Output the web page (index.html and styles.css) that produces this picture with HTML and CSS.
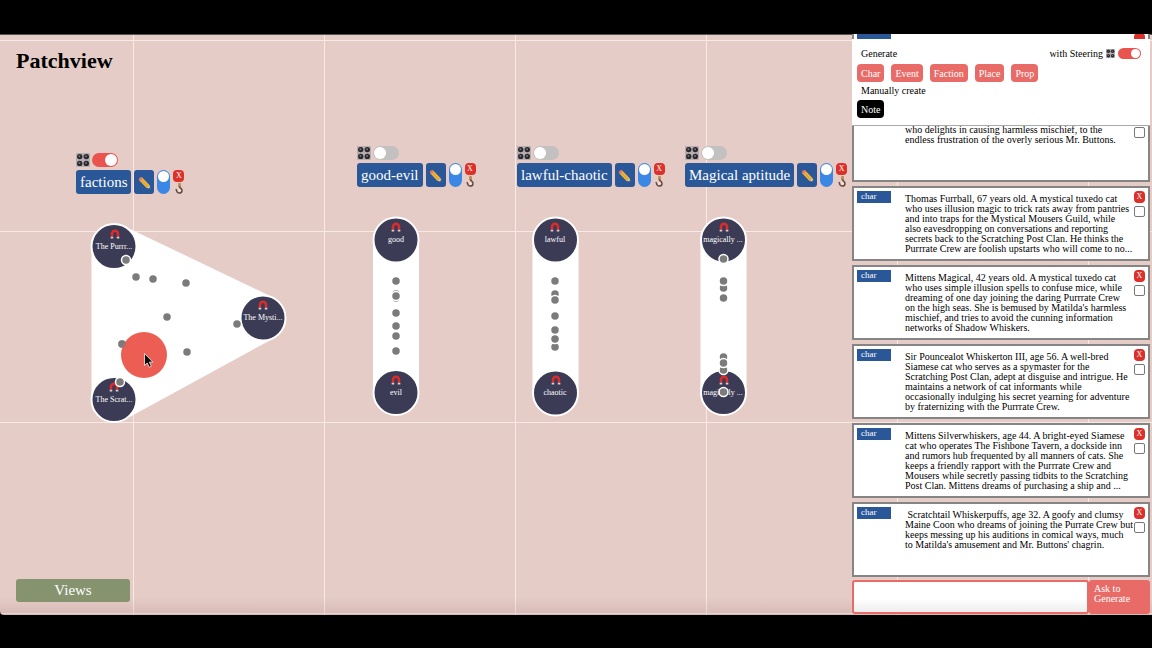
FILE: index.html
```
<!DOCTYPE html>
<html lang="en">
<head>
<meta charset="utf-8">
<title>Patchview</title>
<link rel="stylesheet" href="styles.css">
</head>
<body>
<svg class="defs" aria-hidden="true">
  <symbol id="knobs" viewBox="0 0 14 14">
    <rect width="14" height="14" rx="1" fill="#b4aeb0"/>
    <g fill="#29272b"><circle cx="3.7" cy="3.6" r="2.7"/><circle cx="10.3" cy="3.6" r="2.7"/><circle cx="3.7" cy="10.4" r="2.7"/><circle cx="10.3" cy="10.4" r="2.7"/></g>
    <g fill="#77747c"><circle cx="3.4" cy="3.2" r="1"/><circle cx="10" cy="3.2" r="1"/><circle cx="3.4" cy="10" r="1"/><circle cx="10" cy="10" r="1"/></g>
  </symbol>
  <symbol id="pencil" viewBox="0 0 14 14">
    <path d="M4 1.200 12.600 10 9.200 12.800 1 4.200z" fill="#f0b43c"/>
    <path d="M2.800 3 10.600 11.600" stroke="#cf9130" stroke-width=".8"/>
    <path d="M4 1.200 5.200 2.500 2.300 5.500 1 4.200C.6 2.600 2.400.8 4 1.200z" fill="#e0776c"/>
    <path d="M12.600 10 13.300 13.500 9.200 12.800z" fill="#ecd3a5"/>
    <path d="M12.900 12 13.300 13.500 11.600 13.200z" fill="#333"/>
  </symbol>
  <symbol id="hook" viewBox="0 0 10 11">
    <path d="M4.300 0h2.400l.3 4H4z" fill="#b78c52"/>
    <path d="M5.500 3.500C5.500 5.200 8 5.200 8 7.400A2.700 2.700 0 0 1 2.600 7.400L1.800 6.200" fill="none" stroke="#66483c" stroke-width="1.500"/>
    <circle cx="5.400" cy="7.400" r="1" fill="#f6eee8"/>
  </symbol>
  <symbol id="magnet" viewBox="0 0 9 9">
    <path d="M1.800 7V4.300a2.700 2.700 0 0 1 5.400 0V7" fill="none" stroke="#de2c2a" stroke-width="2.300"/>
    <path d="M.6 7h2.300v1.600H.6zM6.100 7h2.300v1.600H6.100z" fill="#d6d0d6"/>
  </symbol>
</svg>

<main class="app">
  <section class="canvas">
    <h1 class="title">Patchview</h1>

    <svg class="plot" viewBox="0 34 852 581" width="852" height="581">
      <g class="area">
        <path d="M114.500 247 263 318 114.500 399z"/>
        <path d="M396 240V392.500M555.500 240V393M723.500 240V392.500"/>
      </g>
      <g class="node">
        <circle cx="114" cy="246.500" r="22.500"/><circle cx="263" cy="318" r="22.500"/><circle cx="114" cy="399.500" r="22.500"/>
        <circle cx="396" cy="240" r="22.500"/><circle cx="396" cy="392.500" r="22.500"/>
        <circle cx="555.500" cy="240" r="22.500"/><circle cx="555.500" cy="393" r="22.500"/>
        <circle cx="723.500" cy="240" r="22.500"/><circle cx="723.500" cy="392.500" r="22.500"/>
      </g>
      <g>
        <use href="#magnet" x="110" y="229" width="10" height="10"/><use href="#magnet" x="258" y="300" width="10" height="10"/><use href="#magnet" x="109" y="382" width="10" height="10"/>
        <use href="#magnet" x="391" y="222" width="10" height="10"/><use href="#magnet" x="391" y="375" width="10" height="10"/>
        <use href="#magnet" x="550" y="222" width="10" height="10"/><use href="#magnet" x="551" y="375" width="10" height="10"/>
        <use href="#magnet" x="719" y="222" width="10" height="10"/><use href="#magnet" x="719" y="375" width="10" height="10"/>
      </g>
      <g class="node-name">
        <text x="114" y="249">The Purrr...</text><text x="263" y="320">The Mysti...</text><text x="114" y="402">The Scrat...</text>
        <text x="396" y="242">good</text><text x="396" y="395">evil</text>
        <text x="555" y="242">lawful</text><text x="555" y="395">chaotic</text>
        <text x="723" y="242">magically ...</text><text x="723" y="395">magically ...</text>
      </g>
      <g class="dot">
        <circle cx="126" cy="260" r="4.500"/><circle cx="136" cy="277" r="4.500"/><circle cx="153" cy="279" r="4.500"/><circle cx="186" cy="283" r="4.500"/><circle cx="167" cy="317" r="4.500"/><circle cx="237" cy="324" r="4.500"/><circle cx="122" cy="344" r="4.500"/><circle cx="187" cy="352" r="4.500"/><circle cx="120" cy="382" r="4.500"/>
        <circle cx="396" cy="281" r="4.500"/><circle cx="396" cy="294" r="4.500"/><circle cx="396" cy="298" r="4.500"/><circle cx="396" cy="296" r="4.500"/><circle cx="396" cy="313" r="4.500"/><circle cx="396" cy="326" r="4.500"/><circle cx="396" cy="336" r="4.500"/><circle cx="396" cy="351" r="4.500"/>
        <circle cx="555" cy="281" r="4.500"/><circle cx="555" cy="294" r="4.500"/><circle cx="555" cy="300" r="4.500"/><circle cx="555" cy="316" r="4.500"/><circle cx="555" cy="330" r="4.500"/><circle cx="555" cy="347" r="4.500"/><circle cx="555" cy="339" r="4.500"/>
        <circle cx="723.500" cy="259" r="4.500"/><circle cx="723.500" cy="288" r="4.500"/><circle cx="723.500" cy="281" r="4.500"/><circle cx="723.500" cy="298" r="4.500"/><circle cx="723.500" cy="357" r="4.500"/><circle cx="723.500" cy="370" r="4.500"/><circle cx="723.500" cy="363" r="4.500"/><circle cx="723.500" cy="392" r="4.500"/>
      </g>
      <circle class="drag" cx="144" cy="355" r="23"/>
      <circle cx="122" cy="344" r="4" fill="#7b7b7b" opacity=".5"/>
      <path d="M144.500 353.500v12l2.700-2.500 2 4.300 2.200-1-2-4.200h3.500z" fill="#0c0c0c" stroke="#eee" stroke-width=".8"/>
    </svg>

    <div class="view view-factions">
      <div class="view-steer"><svg class="knobs"><use href="#knobs"/></svg><input class="switch" type="checkbox" checked aria-label="Steer factions"></div>
      <div class="view-bar"><button class="view-name">factions</button><button class="edit" aria-label="Edit"><svg><use href="#pencil"/></svg></button><input class="switch-tall" type="checkbox" checked aria-label="Show factions"><div class="view-side"><button class="close">X</button><svg class="hook"><use href="#hook"/></svg></div></div>
    </div>
    <div class="view view-good">
      <div class="view-steer"><svg class="knobs"><use href="#knobs"/></svg><input class="switch" type="checkbox" aria-label="Steer good-evil"></div>
      <div class="view-bar"><button class="view-name">good-evil</button><button class="edit" aria-label="Edit"><svg><use href="#pencil"/></svg></button><input class="switch-tall" type="checkbox" checked aria-label="Show good-evil"><div class="view-side"><button class="close">X</button><svg class="hook"><use href="#hook"/></svg></div></div>
    </div>
    <div class="view view-lawful">
      <div class="view-steer"><svg class="knobs"><use href="#knobs"/></svg><input class="switch" type="checkbox" aria-label="Steer lawful-chaotic"></div>
      <div class="view-bar"><button class="view-name">lawful-chaotic</button><button class="edit" aria-label="Edit"><svg><use href="#pencil"/></svg></button><input class="switch-tall" type="checkbox" checked aria-label="Show lawful-chaotic"><div class="view-side"><button class="close">X</button><svg class="hook"><use href="#hook"/></svg></div></div>
    </div>
    <div class="view view-magic">
      <div class="view-steer"><svg class="knobs"><use href="#knobs"/></svg><input class="switch" type="checkbox" aria-label="Steer Magical aptitude"></div>
      <div class="view-bar"><button class="view-name">Magical aptitude</button><button class="edit" aria-label="Edit"><svg><use href="#pencil"/></svg></button><input class="switch-tall" type="checkbox" checked aria-label="Show Magical aptitude"><div class="view-side"><button class="close">X</button><svg class="hook"><use href="#hook"/></svg></div></div>
    </div>

    <button class="views">Views</button>
  </section>

  <aside class="sidebar">
    <div class="list">
      <article class="card"><span class="tag"></span><p class="text"></p><div class="card-side"><button class="close" aria-label="Remove"></button><input class="tick" type="checkbox" aria-label="Select"></div></article>
      <article class="card"><span class="tag"></span><p class="text">
who delights in causing harmless mischief, to the
endless frustration of the overly serious Mr. Buttons.</p><div class="card-side"><button class="close" aria-label="Remove"></button><input class="tick" type="checkbox" aria-label="Select"></div></article>
      <article class="card"><span class="tag">char</span><p class="text">Thomas Furrball, 67 years old. A mystical tuxedo cat
who uses illusion magic to trick rats away from pantries
and into traps for the Mystical Mousers Guild, while
also eavesdropping on conversations and reporting
secrets back to the Scratching Post Clan. He thinks the
Purrrate Crew are foolish upstarts who will come to no...</p><div class="card-side"><button class="close">X</button><input class="tick" type="checkbox" aria-label="Select"></div></article>
      <article class="card"><span class="tag">char</span><p class="text">Mittens Magical, 42 years old. A mystical tuxedo cat
who uses simple illusion spells to confuse mice, while
dreaming of one day joining the daring Purrrate Crew
on the high seas. She is bemused by Matilda's harmless
mischief, and tries to avoid the cunning information
networks of Shadow Whiskers.</p><div class="card-side"><button class="close">X</button><input class="tick" type="checkbox" aria-label="Select"></div></article>
      <article class="card"><span class="tag">char</span><p class="text">Sir Pouncealot Whiskerton III, age 56. A well-bred
Siamese cat who serves as a spymaster for the
Scratching Post Clan, adept at disguise and intrigue. He
maintains a network of cat informants while
occasionally indulging his secret yearning for adventure
by fraternizing with the Purrrate Crew.</p><div class="card-side"><button class="close">X</button><input class="tick" type="checkbox" aria-label="Select"></div></article>
      <article class="card"><span class="tag">char</span><p class="text">Mittens Silverwhiskers, age 44. A bright-eyed Siamese
cat who operates The Fishbone Tavern, a dockside inn
and rumors hub frequented by all manners of cats. She
keeps a friendly rapport with the Purrrate Crew and
Mousers while secretly passing tidbits to the Scratching
Post Clan. Mittens dreams of purchasing a ship and ...</p><div class="card-side"><button class="close">X</button><input class="tick" type="checkbox" aria-label="Select"></div></article>
      <article class="card"><span class="tag">char</span><p class="text"> Scratchtail Whiskerpuffs, age 32. A goofy and clumsy
Maine Coon who dreams of joining the Purrate Crew but
keeps messing up his auditions in comical ways, much
to Matilda's amusement and Mr. Buttons' chagrin.</p><div class="card-side"><button class="close">X</button><input class="tick" type="checkbox" aria-label="Select"></div></article>
    </div>

    <div class="panel">
      <div class="panel-head"><span>Generate</span><label class="steering">with Steering <svg class="knobs-small"><use href="#knobs"/></svg><input class="switch switch-small" type="checkbox" checked></label></div>
      <div class="buttons"><button class="make">Char</button><button class="make">Event</button><button class="make">Faction</button><button class="make">Place</button><button class="make">Prop</button></div>
      <div class="panel-sub">Manually create</div>
      <div class="buttons"><button class="make make-note">Note</button></div>
    </div>

    <form class="ask"><input class="ask-text" type="text" aria-label="Prompt"><button class="ask-send" type="button">Ask to Generate</button></form>
  </aside>
</main>
</body>
</html>
```

FILE: styles.css
```
* { box-sizing: border-box; }

body {
  margin: 0;
  height: 100vh;
  padding: 34px 0 33px;
  background: #000;
  color: #000;
  font-family: "Liberation Serif", Georgia, serif;
  overflow: hidden;
}

button {
  border: 0;
  padding: 0;
  font-family: inherit;
  color: #fff;
  white-space: nowrap;
}

input { margin: 0; }
.defs { position: absolute; width: 0; height: 0; }

.app {
  display: flex;
  height: 100%;
  border-bottom-left-radius: 4px;
  background-color: #e6ccc7;
  background-image:
    linear-gradient(to bottom, transparent 97%, rgba(110, 70, 65, 0.14)),
    linear-gradient(to right, #f7e9e6 1px, transparent 1px),
    linear-gradient(to bottom, #f7e9e6 1px, transparent 1px);
  background-size: 100% 100%, 191px 191px, 191px 191px;
  background-position: 0 0, 133px 0, 0 6px;
  box-shadow: inset 0 1px #555;
}

.canvas {
  position: relative;
  flex: 1;
  min-width: 0;
  display: flex;
  flex-direction: column;
  justify-content: space-between;
  align-items: flex-start;
  padding: 14px 16px 13px;
}

.title { margin: 0; font-size: 22px; line-height: 26px; }

.views {
  width: 114px;
  height: 23px;
  border-radius: 3px;
  background: #85936f;
  font-size: 15px;
}

/* plot */
.plot { position: absolute; left: 0; top: 0; }
.area { fill: #fff; stroke: #fff; stroke-width: 46; stroke-linejoin: round; }
.node { fill: #3b3b55; stroke: #fff; stroke-width: 2; }
.node-name { fill: #fff; font-size: 8px; text-anchor: middle; }
.dot { fill: #7b7b7b; stroke: #fff; stroke-width: 1.5; }
.drag { fill: #ec5d54; }

/* view headers placed on the canvas */
.view { position: absolute; display: grid; gap: 3px; }
.view-factions { left: 76px; top: 119px; }
.view-good { left: 357px; top: 112px; }
.view-lawful { left: 517px; top: 112px; }
.view-magic { left: 685px; top: 112px; }
.view-steer { display: flex; align-items: center; gap: 2px; }
.view-bar { display: flex; gap: 3px; }
.view-name {
  height: 24px;
  padding: 0 4px;
  border-radius: 3px;
  background: #2a5798;
  font-size: 15px;
}
.edit {
  display: grid;
  place-items: center;
  width: 20px;
  border-radius: 3px;
  background: #2a5798;
}
.edit svg { width: 13px; height: 13px; }
.view-side { display: grid; justify-items: center; gap: 1px; align-content: start; }
.knobs { width: 14px; height: 14px; }
.knobs-small { width: 9px; height: 9px; }
.hook { width: 10px; height: 11px; }

.close {
  width: 11px;
  height: 12px;
  border-radius: 4px;
  background: #dc3028;
  font-size: 8px;
  line-height: 12px;
}

.switch {
  appearance: none;
  display: flex;
  align-items: center;
  width: 26px;
  height: 14px;
  padding: 0 1px;
  border-radius: 7px;
  background: #c3c0c0;
}
.switch::before { content: ""; width: 12px; height: 12px; border-radius: 50%; background: #fff; }
.switch:checked { justify-content: flex-end; background: #e9554e; }
.switch-small { width: 23px; height: 11px; }
.switch-small::before { width: 9px; height: 9px; }

.switch-tall {
  appearance: none;
  width: 13px;
  height: 24px;
  padding: 1px;
  border-radius: 7px;
  background: #3b87e6;
}
.switch-tall::before { content: ""; display: block; width: 11px; height: 11px; border-radius: 50%; background: #fff; }

/* sidebar */
.sidebar {
  position: relative;
  flex: 0 0 300px;
  min-width: 0;
  display: flex;
  flex-direction: column;
  gap: 3px;
  padding-bottom: 1px;
}
.list {
  flex: 1;
  min-height: 0;
  display: flex;
  flex-direction: column;
  justify-content: flex-end;
  gap: 4px;
  margin-right: 2px;
  overflow: hidden;
}
.card {
  flex: none;
  display: flex;
  align-items: flex-start;
  height: 75px;
  padding: 3px;
  border: 2px solid #858585;
  background: #fff;
}
.tag {
  width: 34px;
  height: 12px;
  padding-left: 4px;
  background: #2a5798;
  color: #fff;
  font-size: 9px;
  line-height: 11px;
}
.text {
  flex: 1;
  min-width: 0;
  margin: 3px 0 0 14px;
  font-size: 10px;
  line-height: 10px;
  white-space: pre;
}
.card-side { display: grid; justify-items: center; gap: 3px; }
.tick {
  appearance: none;
  width: 11px;
  height: 11px;
  border: 1px solid #777;
  border-radius: 2px;
  background: #fff;
}

.panel {
  position: absolute;
  top: 5px;
  left: 0;
  right: 2px;
  padding: 7px 9px 7px 5px;
  border-bottom: 1px solid #aaa;
  background: #fff;
  font-size: 10px;
}
.panel-head { display: flex; justify-content: space-between; padding-left: 4px; height: 14px; align-items: center; }
.panel-sub { padding: 3px 4px; line-height: 12px; }
.steering { display: flex; align-items: center; gap: 3px; }
.buttons { display: flex; gap: 7px; }
.panel-head + .buttons { padding-top: 4px; }
.make {
  height: 18px;
  padding: 0 4px;
  border-radius: 4px;
  background: #e86b67;
  font-size: 10px;
}
.make-note { background: #000; }

.ask { display: flex; height: 34px; margin-right: 2px; }
.ask-text {
  flex: 1;
  min-width: 0;
  border: 2px solid #e86b67;
  border-radius: 3px;
  background: linear-gradient(#fff 55%, #eee);
  font-family: inherit;
  font-size: 10px;
}
.ask-send {
  width: 61px;
  padding: 4px 10px 0 5px;
  border-radius: 3px;
  background: #e86b67;
  font-size: 10px;
  line-height: 10px;
  text-align: left;
  display: flex;
  white-space: normal;
}
```
